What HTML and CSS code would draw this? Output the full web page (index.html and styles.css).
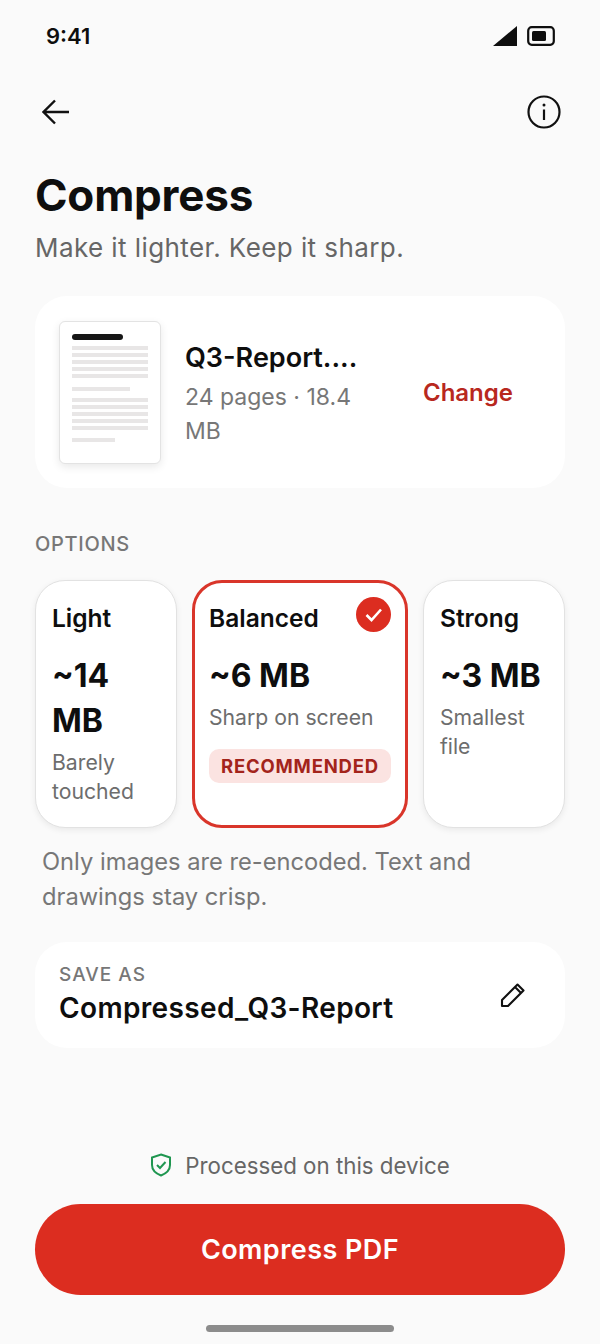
FILE: index.html
```html
<!DOCTYPE html>
<html lang="en">
<head>
<meta charset="utf-8">
<title>Compress</title>
<link rel="stylesheet" href="styles.css">
</head>
<body>
<div class="screen">
  <div class="status">
    <span class="time">9:41</span>
    <div class="status-icons">
      <svg width="24" height="20" viewBox="0 0 24 20"><path d="M0 20 24 0v20z" fill="#0e0e0e"/></svg>
      <svg width="28" height="20" viewBox="0 0 28 20"><rect x="1.2" y="1.2" width="25.6" height="17.6" rx="3.5" fill="none" stroke="#0e0e0e" stroke-width="2.2"/><rect x="5" y="5" width="14" height="10" rx="1.5" fill="#0e0e0e"/></svg>
    </div>
  </div>
  <div class="toolbar">
    <svg width="28" height="26" viewBox="0 0 28 26"><path d="M27 13H2M13 1.5 1.500 13 13 24.500" fill="none" stroke="#111" stroke-width="2.4"/></svg>
    <svg width="34" height="34" viewBox="0 0 34 34"><circle cx="17" cy="17" r="15.500" fill="none" stroke="#111" stroke-width="2.200"/><path d="M17 14.500V25" stroke="#111" stroke-width="2.200"/><circle cx="17" cy="10" r="1.500" fill="#111"/></svg>
  </div>
  <h1 class="title">Compress</h1>
  <p class="subtitle">Make it lighter. Keep it sharp.</p>

  <section class="file-card">
    <div class="thumb">
      <div class="thumb-head"></div>
      <div class="thumb-group">
        <i></i><i></i><i></i><i></i><i></i>
      </div>
      <div class="thumb-line w-short"></div>
      <div class="thumb-group">
        <i></i><i></i><i></i><i></i><i></i>
      </div>
      <div class="thumb-line w-tiny"></div>
    </div>
    <div class="file-info">
      <div class="file-name">Q3-Report....</div>
      <div class="file-meta">24 pages · 18.4 MB</div>
    </div>
    <span class="change">Change</span>
  </section>

  <div class="section-label">OPTIONS</div>
  <div class="options">
    <div class="option side">
      <div class="opt-name">Light</div>
      <div class="opt-size">~14 MB</div>
      <div class="opt-desc">Barely touched</div>
    </div>
    <div class="option selected">
      <div class="opt-name">Balanced</div>
      <svg class="check" width="35" height="35" viewBox="0 0 35 35"><circle cx="17.500" cy="17.500" r="17.500" fill="#dc2d20"/><path d="M10.500 18 15.500 23 25 12.500" fill="none" stroke="#fff" stroke-width="2.600"/></svg>
      <div class="opt-size">~6 MB</div>
      <div class="opt-desc">Sharp on screen</div>
      <div class="badge">RECOMMENDED</div>
    </div>
    <div class="option side">
      <div class="opt-name">Strong</div>
      <div class="opt-size">~3 MB</div>
      <div class="opt-desc">Smallest file</div>
    </div>
  </div>
  <p class="note">Only images are re-encoded. Text and drawings stay crisp.</p>

  <section class="save-card">
    <div>
      <div class="save-label">SAVE AS</div>
      <div class="save-name">Compressed_Q3-Report</div>
    </div>
    <svg width="26" height="26" viewBox="0 0 26 26"><path d="M2 24V18L17.500 2.500 23.500 8.500 8 24zM15 5 21 11" fill="none" stroke="#111" stroke-width="2.100" stroke-linejoin="round"/></svg>
  </section>

  <div class="spacer"></div>
  <div class="privacy">
    <svg width="22" height="24" viewBox="0 0 22 24"><path d="M11 1.500 20 4.500V12C20 17 16 20.500 11 22.500 6 20.500 2 17 2 12V4.500z" fill="none" stroke="#1f9650" stroke-width="2"/><path d="M7 12 10 15 15.500 9" fill="none" stroke="#1f9650" stroke-width="2"/></svg>
    <span>Processed on this device</span>
  </div>
  <button class="cta">Compress PDF</button>
  <div class="home-pill"></div>
</div>
</body>
</html>
```
FILE: styles.css
```css
* { box-sizing: border-box; }
html, body { margin: 0; padding: 0; }
body { background: #fafafa; font-family: "Inter", "Liberation Sans", sans-serif; color: #0e0e0e; }
.screen { width: 600px; height: 1344px; padding: 0 35px; display: flex; flex-direction: column; overflow: hidden; }
.status { height: 72px; flex: none; display: flex; justify-content: space-between; align-items: center; padding: 0 10px 0 11px; }
.time { font-size: 22px; font-weight: 600; }
.status-icons { display: flex; align-items: center; gap: 10px; }
.toolbar { height: 48px; margin-top: 16px; display: flex; justify-content: space-between; align-items: center; padding: 0 4px 0 7px; flex: none; }
.title { margin: 33px 0 0; font-size: 44px; line-height: 52px; font-weight: 700; letter-spacing: -0.2px; }
.subtitle { margin: 10px 0 0; font-size: 26px; line-height: 34px; color: #666; letter-spacing: 0.42px; }
.file-card { margin-top: 31px; height: 192px; background: #fff; border-radius: 32px; display: flex; align-items: center; padding: 0 52px 0 24px; flex: none; }
.thumb { width: 102px; height: 143px; flex: none; border: 1px solid #e3e3e3; border-radius: 6px; background: #fff; box-shadow: 0 3px 8px rgba(0,0,0,.09); padding: 12px 12px 0; display: flex; flex-direction: column; }
.thumb-head { width: 51px; height: 6px; border-radius: 3px; background: #161616; margin-bottom: 6px; }
.thumb-group { display: flex; flex-direction: column; gap: 3px; }
.thumb-group i { display: block; height: 4px; background: #e8e6e6; }
.thumb-line { height: 4px; background: #e8e6e6; }
.w-short { width: 58px; margin: 9px 0 7px; }
.w-tiny { width: 43px; margin-top: 8px; }
.file-info { width: 180px; margin: 4px 0 0 24px; flex: none; }
.file-name { font-size: 27px; line-height: 36px; font-weight: 600; }
.file-meta { margin-top: 4px; font-size: 23px; line-height: 34px; color: #777; }
.change { margin-left: auto; font-size: 24px; font-weight: 600; color: #b8281e; }
.section-label { margin-top: 44px; font-size: 20px; line-height: 24px; font-weight: 500; letter-spacing: 0.7px; color: #777; flex: none; }
.options { margin-top: 24px; display: grid; grid-template-columns: 142px 216px 142px; column-gap: 15px; height: 247px; flex: none; }
.option { position: relative; background: #fff; border-radius: 30px; padding: 21px 16px; }
.side { border: 1px solid #e2e2e2; box-shadow: 0 2px 6px rgba(0,0,0,.07); }
.selected { border: 3px solid #d9352a; padding: 19px 14px; }
.opt-name { font-size: 24.5px; line-height: 32px; font-weight: 600; }
.check { position: absolute; top: 14px; right: 14px; }
.opt-size { margin-top: 19px; font-size: 32px; line-height: 45px; font-weight: 700; }
.opt-desc { margin-top: 5px; font-size: 21.2px; line-height: 29px; color: #6d6d6d; }
.badge { margin-top: 17px; height: 34px; border-radius: 10px; background: #fbe3e1; color: #a3241b; font-size: 18.5px; font-weight: 700; letter-spacing: 0.8px; display: flex; align-items: center; justify-content: center; }
.note { margin: 17px 0 0; padding: 0 7px; font-size: 23.7px; line-height: 35px; color: #777; flex: none; }
.save-card { margin-top: 28px; height: 106px; background: #fff; border-radius: 32px; display: flex; align-items: center; justify-content: space-between; padding: 0 39px 0 24px; flex: none; }
.save-label { font-size: 19px; line-height: 24px; font-weight: 500; letter-spacing: 1px; color: #777; margin-top: -1px; }
.save-name { font-size: 28px; line-height: 36px; font-weight: 600; letter-spacing: 0.35px; margin-top: 3px; }
.spacer { flex: 1; }
.privacy { display: flex; justify-content: center; align-items: center; gap: 13px; font-size: 22.3px; color: #666; height: 28px; margin-bottom: 25px; flex: none; }
.cta { height: 91px; border: 0; border-radius: 46px; background: #dc2d20; color: #fff; font: 600 27px "Inter", "Liberation Sans", sans-serif; letter-spacing: 0.45px; flex: none; }
.home-pill { width: 188px; height: 7px; border-radius: 4px; background: #8c8c8c; margin: 30px auto 12px; flex: none; }
```
